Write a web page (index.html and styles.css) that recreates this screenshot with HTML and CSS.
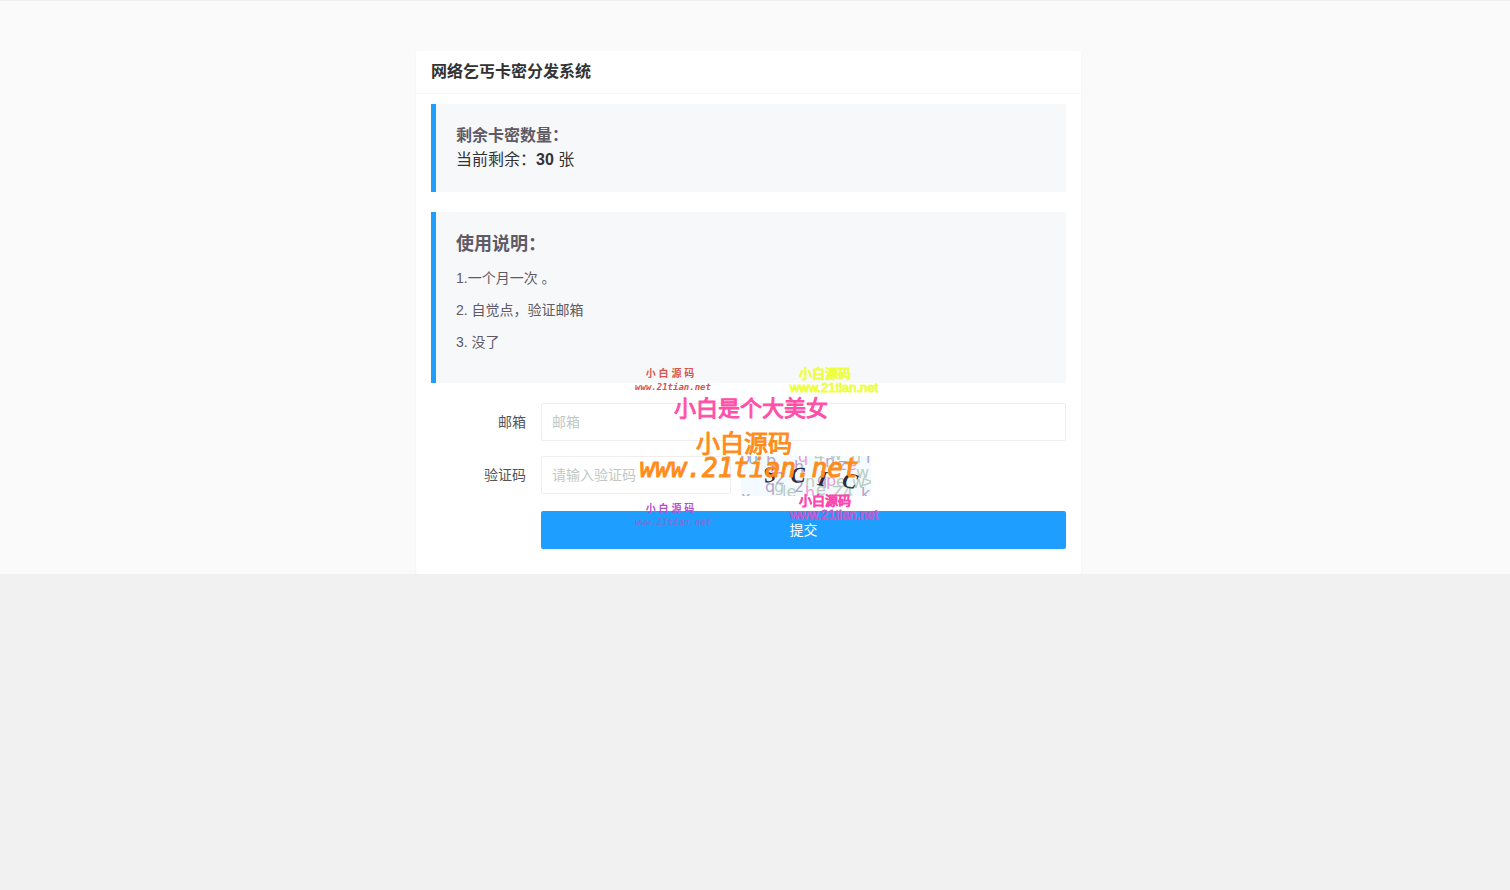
FILE: index.html
```html
<!DOCTYPE html>
<html lang="zh-CN">
<head>
    <meta charset="UTF-8">
    <meta name="viewport" content="width=device-width, initial-scale=1.0">
    <title>网络乞丐卡密分发系统</title>
    <link rel="stylesheet" href="styles.css">
</head>
<body>
    <main class="page">
        <div class="card">
            <h1 class="card-header">网络乞丐卡密分发系统</h1>
            <div class="card-body">
                <div class="quote">
                    <h3>剩余卡密数量：</h3>
                    <div class="count">当前剩余：<b>30</b> 张</div>
                </div>
                <div class="quote">
                    <h2>使用说明：</h2>
                    <p>1.一个月一次 。</p>
                    <p>2. 自觉点，验证邮箱</p>
                    <p>3. 没了</p>
                </div>
                <form class="form">
                    <div class="form-item">
                        <label for="email">邮箱</label>
                        <input type="text" id="email" name="email" placeholder="邮箱">
                    </div>
                    <div class="form-item">
                        <label for="code">验证码</label>
                        <input type="text" id="code" name="code" class="code" placeholder="请输入验证码">
                        <svg class="captcha" viewBox="0 0 130 40">
                            <g class="noise">
                                <g class="violet">
                                    <text x="-1" y="7">p</text>
                                    <text x="25" y="10">b</text>
                                    <text x="34" y="28">2</text>
                                    <text x="24" y="36">q</text>
                                    <text x="53" y="36">2</text>
                                    <text x="84" y="11">n</text>
                                    <text x="97" y="14">z</text>
                                    <text x="76" y="29">q</text>
                                    <text x="125" y="7">n</text>
                                    <text x="53" y="16">h</text>
                                    <text x="120" y="43">k</text>
                                    <text x="0" y="47">x</text>
                                </g>
                                <g class="green">
                                    <text x="33" y="36">g</text>
                                    <text x="41" y="41">le</text>
                                    <text x="73" y="5">4</text>
                                    <text x="88" y="4">w</text>
                                    <text x="64" y="31">n</text>
                                    <text x="95" y="31">e</text>
                                    <text x="111" y="32">w</text>
                                    <text x="120" y="31">&gt;</text>
                                    <text x="115" y="22">w</text>
                                    <text x="91" y="42">Z</text>
                                    <text x="102" y="42">4</text>
                                    <text x="75" y="39">e</text>
                                    <text x="110" y="7">u</text>
                                </g>
                                <g class="pink">
                                    <text x="57" y="6">q</text>
                                    <text x="29" y="18">e</text>
                                    <text x="106" y="14">e</text>
                                    <text x="85" y="30">p</text>
                                    <text x="64" y="42">h</text>
                                </g>
                                <text class="blue" x="7" y="8">u</text>
                            </g>
                            <g class="letters">
                                <text transform="translate(24 27) rotate(-12)">S</text>
                                <text transform="translate(50 27) rotate(-4)">C</text>
                                <text transform="translate(76 29) rotate(10)">I</text>
                                <text transform="translate(100 30) rotate(14)">C</text>
                            </g>
                        </svg>
                    </div>
                    <div class="form-item">
                        <button type="submit" class="submit">提交</button>
                    </div>
                </form>
            </div>
            <!-- watermarks lie over the whole form -->
            <svg class="watermark" viewBox="0 0 260 170">
                <g class="brush red">
                    <text x="40" y="12">小 白 源 码</text>
                    <text class="url" x="43" y="25">www.21tian.net</text>
                </g>
                <g class="round yellow">
                    <text x="195" y="13">小白源码</text>
                    <text x="204" y="27">www.21tian.net</text>
                </g>
                <text class="title" x="121" y="51">小白是个大美女</text>
                <g class="main">
                    <text x="114" y="87">小白源码</text>
                    <text class="url" x="119" y="112">www.21tian.net</text>
                </g>
                <g class="brush purple">
                    <text x="40" y="147">小 白 源 码</text>
                    <text class="url" x="43" y="160">www.21tian.net</text>
                </g>
                <g class="round magenta">
                    <text x="195" y="140">小白源码</text>
                    <text x="204" y="154">www.21tian.net</text>
                </g>
            </svg>
        </div>
    </main>
</body>
</html>
```

FILE: styles.css
```css
* {
    box-sizing: border-box;
}
body {
    margin: 0;
    background: #f1f1f1;
    color: #333;
    font: 14px/24px "Liberation Sans", "Noto Sans CJK SC", sans-serif;
}
h1, h2, h3, p {
    margin: 0;
}
.page {
    padding: 50px 13px 0 0;
    background: #fafafa;
    border-top: 1px solid #eee;
}
.card {
    position: relative;
    max-width: 665px;
    margin: 0 auto;
    background: #fff;
    border-radius: 2px;
    box-shadow: 0 1px 2px rgba(0, 0, 0, 0.06);
}
.card-header {
    padding: 0 15px;
    border-bottom: 1px solid #f6f6f6;
    font-size: 16px;
    line-height: 42px;
}
.card-body {
    padding: 10px 15px 25px;
}
.quote {
    margin-bottom: 20px;
    padding: 20px;
    border-left: 5px solid #1e9fff;
    background: #f7f8fa;
    color: #5f5b66;
}
.quote h3 {
    font-size: 16px;
}
.quote .count {
    color: #333;
    font-size: 16px;
}
.quote h2 {
    margin-bottom: 10px;
    font-size: 18px;
    line-height: 25px;
}
.quote p {
    margin-bottom: 10px;
    line-height: 22px;
}
.form {
    display: flex;
    flex-direction: column;
    gap: 15px;
}
.form-item {
    display: flex;
    align-items: flex-start;
}
.form-item label {
    flex: none;
    width: 110px;
    padding-right: 15px;
    color: #555;
    line-height: 38px;
    text-align: right;
}
.form-item input {
    flex: 1;
    min-width: 0;
    height: 38px;
    padding: 0 10px;
    border: 1px solid #eee;
    border-radius: 2px;
    background: #fff;
    font: inherit;
}
.form-item .code {
    flex: 0 1 190px;
}
.form-item input::placeholder {
    color: #bfc9c4;
}
.submit {
    flex: 1;
    height: 38px;
    margin-left: 110px;
    border: 0;
    border-radius: 2px;
    background: #1e9fff;
    color: #fff;
    font: inherit;
}

/* captcha */
.captcha {
    width: 130px;
    height: 40px;
    margin-left: 10px;
    background: #f3fbfe;
}
.noise {
    font: 16px "DejaVu Sans", sans-serif;
}
.violet { fill: #b5a3c9; }
.green { fill: #bccbc3; }
.pink { fill: #ef9bd2; }
.blue { fill: #8fb2e2; }
.letters {
    fill: #30293b;
    font: italic bold 22px "Liberation Serif", serif;
}

/* watermark */
.watermark {
    position: absolute;
    top: 314px;
    left: 214px;
    width: 260px;
    height: 170px;
    pointer-events: none;
    text-anchor: middle;
    font-family: "Liberation Sans", "Noto Sans CJK SC", sans-serif;
    stroke-linejoin: round;
}
.brush {
    font-size: 10px;
    font-weight: bold;
}
.brush .url {
    font: italic bold 9px "DejaVu Sans Mono", monospace;
}
.round {
    font-size: 13px;
    stroke-width: 1px;
}
.title {
    fill: #ff4fa8;
    stroke: #ff4fa8;
    stroke-width: 1px;
    font-size: 22px;
}
.main {
    fill: #ff8c1a;
    stroke: #ff8c1a;
    stroke-width: 1px;
    font-size: 24px;
}
.main .url {
    font: italic 26px "DejaVu Sans Mono", monospace;
}
.red { fill: #d9534f; }
.yellow {
    fill: #eeff41;
    stroke: #eeff41;
}
.purple { fill: #b44fd0; }
.purple .url { fill: #6a78dc; }
.magenta {
    fill: #ff45b0;
    stroke: #ff45b0;
}
.magenta text + text {
    fill: #b55fd0;
    stroke: #b55fd0;
}
```
